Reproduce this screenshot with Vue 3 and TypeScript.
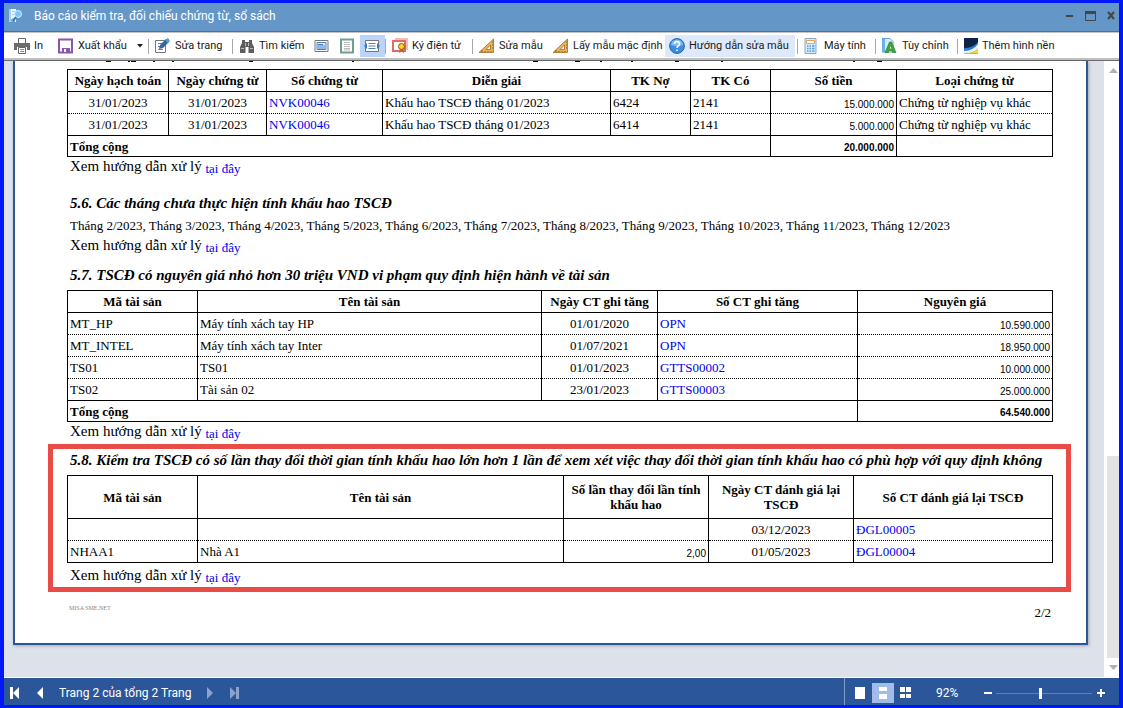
<script setup lang="ts">
import { ref } from 'vue'

const voucherCols = [101, 98, 116, 228, 80, 80, 126, 156]
const assetCols = [130, 344, 116, 200, 195]
const changeCols = [130, 366, 145, 145, 199]

const share = (cols: number[], i: number) =>
  ({ width: (cols[i] / cols.reduce((a, b) => a + b, 0)) * 100 + '%' })

const vouchers = [
  { posted: '31/01/2023', dated: '31/01/2023', no: 'NVK00046', note: 'Khấu hao TSCĐ tháng 01/2023', debit: '6424', credit: '2141', amount: '15.000.000', kind: 'Chứng từ nghiệp vụ khác' },
  { posted: '31/01/2023', dated: '31/01/2023', no: 'NVK00046', note: 'Khấu hao TSCĐ tháng 01/2023', debit: '6414', credit: '2141', amount: '5.000.000', kind: 'Chứng từ nghiệp vụ khác' },
]
const assets = [
  { code: 'MT_HP', name: 'Máy tính xách tay HP', date: '01/01/2020', no: 'OPN', cost: '10.590.000' },
  { code: 'MT_INTEL', name: 'Máy tính xách tay Inter', date: '01/07/2021', no: 'OPN', cost: '18.950.000' },
  { code: 'TS01', name: 'TS01', date: '01/01/2023', no: 'GTTS00002', cost: '10.000.000' },
  { code: 'TS02', name: 'Tài sản 02', date: '23/01/2023', no: 'GTTS00003', cost: '25.000.000' },
]
const changes = [
  { code: '', name: '', count: '', date: '03/12/2023', no: 'ĐGL00005' },
  { code: 'NHAA1', name: 'Nhà A1', count: '2,00', date: '01/05/2023', no: 'ĐGL00004' },
]
const months = [2, 3, 4, 5, 6, 7, 8, 9, 10, 11, 12].map((m) => `Tháng ${m}/2023`).join(', ')
const zoom = ref(92)
</script>

<template>
  <div class="window">
    <header class="titlebar">
      <svg class="app-icon" width="16" height="16" viewBox="0 0 16 16">
        <path d="M1 1h7v13H1z" fill="#e8f6ff" />
        <path d="M1 1h2v13H1zM4 3h3v1H4zM4 6h2v1H4z" fill="#9fd2f2" />
        <circle cx="10" cy="6" r="3.5" fill="#7cc4f4" stroke="#d8f0ff" />
        <path d="M8 9l-3 4" stroke="#2f6fc0" stroke-width="2" />
        <circle cx="5" cy="12.500" r="1.500" fill="none" stroke="#3c7fd0" />
      </svg>
      <h1>Báo cáo kiểm tra, đối chiếu chứng từ, sổ sách</h1>
      <button class="win-btn" aria-label="Thu nhỏ"><svg width="12" height="12"><path d="M3 5h7v2H3z" fill="#444" /></svg></button>
      <button class="win-btn" aria-label="Phóng to"><svg width="12" height="12"><path d="M1.500 1.500h10v9h-10z" fill="none" stroke="#444" /><path d="M1 1h11v3H1z" fill="#444" /></svg></button>
      <button class="win-btn" aria-label="Đóng"><svg width="12" height="12"><path d="M3 2l6 7M9 2L3 9" stroke="#444" stroke-width="2" /></svg></button>
    </header>

    <div class="toolbar">
      <button class="tool t-print">
        <svg width="16" height="16" viewBox="0 0 16 16">
          <path d="M4.500 5V.5h7V5" fill="#fff" stroke="#666" />
          <path d="M0 5h16v7h-3V9H3v3H0z" fill="#6b6b6b" />
          <path d="M4.500 9.500h7v6h-7z" fill="#fff" stroke="#666" /><path d="M6 11.500h4M6 13.500h4" stroke="#5b9bd5" />
        </svg>In
      </button>
      <button class="tool t-export">
        <svg width="16" height="16" viewBox="0 0 16 16">
          <path d="M1 1.500h13v13H1z" fill="#fff" stroke="#8a55ae" stroke-width="2" />
          <path d="M4 10h8v4H4z" fill="#8a55ae" /><path d="M6 11h2v3H6z" fill="#fff" />
        </svg>Xuất khẩu
      </button>
      <button class="tool t-arrow" aria-label="Tùy chọn xuất khẩu"><svg width="6" height="4"><path d="M0 0h6L3 3.500z" fill="#222" /></svg></button>
      <i class="sep"></i>
      <button class="tool t-edit">
        <svg width="16" height="16" viewBox="0 0 16 16">
          <path d="M.5 2.500h10v12H.5z" fill="#fff" stroke="#777" /><path d="M3 5.500h5M3 8.500h3M3 11.500h5" stroke="#5b87b8" />
          <path d="M4 11l1-4 6-6 3 3-6 6z" fill="#35669c" /><path d="M10 2l3 3 2-2-2-3z" fill="#5b9bd5" />
        </svg>Sửa trang
      </button>
      <i class="sep"></i>
      <button class="tool t-find">
        <svg width="16" height="16" viewBox="0 0 16 16">
          <path d="M3 2h3v2h4V2h3v3l2 4v6H9.500V9h-3v6H1V9l2-4z" fill="#5d5d5d" />
          <path d="M6.500 5v3M9.500 5v3M2 10.500h3M11 10.500h3" stroke="#bbb" />
        </svg>Tìm kiếm
      </button>
      <button class="tool t-view" aria-label="Xem ngang"><svg width="16" height="16" viewBox="0 0 16 16"><path d="M1 2.500h13v11H1z" fill="#fff" stroke="#777" /><path d="M3 4.500h9v7H3z" fill="#dcecff" stroke="#4a82bd" /><path d="M4 6.500h5M4 8h7M4 10h7" stroke="#4a82bd" /></svg></button>
      <button class="tool t-view" aria-label="Xem dọc"><svg width="16" height="16" viewBox="0 0 16 16"><path d="M2 1.500h12v13H2z" fill="#fff" stroke="#6ea08a" stroke-width="2" /><path d="M5 4.500h6M5 6.500h6M5 8.500h6M5 10.500h6M5 12h6" stroke="#aaa" stroke-width=".8" /></svg></button>
      <button class="tool t-view active" aria-label="Vừa chiều rộng"><svg width="16" height="16" viewBox="0 0 16 16"><path d="M1.500 2.500h13v11h-13z" fill="#fff" stroke="#777" /><path d="M4.500 5.500h7M4.500 8h7M4.500 10.500h7" stroke="#4a82bd" /><path d="M0 8l3-3v6zM16 8l-3-3v6z" fill="#3f79b8" /></svg></button>
      <i class="sep"></i>
      <button class="tool t-sign">
        <svg width="16" height="16" viewBox="0 0 16 16">
          <path d="M1 3h12v10H1z" fill="#fff" stroke="#e26a62" stroke-width="2" /><path d="M3 1h12v11" fill="none" stroke="#f0a49f" stroke-width="1.500" />
          <path d="M8 10l-1 5 3-1.500 2 2-.5-5.500z" fill="#d95a32" /><circle cx="9.500" cy="8.500" r="3" fill="#ffd21f" stroke="#7c5a18" />
        </svg>Ký điện tử
      </button>
      <i class="sep"></i>
      <button class="tool t-template">
        <svg width="16" height="16" viewBox="0 0 16 16"><path d="M0 14.500L14.500 1v13.500zM7 11.500h4.500V7z" fill="#eab558" stroke="#a66a22" stroke-width=".8" fill-rule="evenodd" /><path d="M3 14v-2M6 14v-1M9 14v-1M12 14v-1M14 4h-1M14 7h-1M14 10h-1" stroke="#875113" /></svg>Sửa mẫu
      </button>
      <button class="tool t-default">
        <svg width="16" height="16" viewBox="0 0 16 16"><path d="M0 14.500L14.500 1v13.500zM7 11.500h4.500V7z" fill="#eab558" stroke="#a66a22" stroke-width=".8" fill-rule="evenodd" /><path d="M3 14v-2M6 14v-1M9 14v-1M12 14v-1M14 4h-1M14 7h-1M14 10h-1" stroke="#875113" /></svg>Lấy mẫu mặc định
      </button>
      <button class="tool t-help">
        <svg width="16" height="16" viewBox="0 0 16 16"><circle cx="8" cy="8" r="7.400" fill="#3a8ee6" stroke="#2563ad" /><path d="M2 7a6 5.500 0 0 1 12 0q-6 2-12 0" fill="#7fbdf6" /><path d="M5.500 6q0-2.500 2.500-2.500T10.500 6q0 1.200-1.300 2T8 10M8 11.500v1.500" fill="none" stroke="#fff" stroke-width="1.600" /></svg>Hướng dẫn sửa mẫu
      </button>
      <i class="sep"></i>
      <button class="tool t-calc">
        <svg width="16" height="16" viewBox="0 0 16 16"><path d="M1 .5h11v15H1z" fill="#d7ecfa" stroke="#88a9c4" /><path d="M2.500 2.500h8v3h-8z" fill="#fff" stroke="#e7a35b" /><path d="M3 8h1.500M5.500 8H7M8 8h2.500M3 10.500h1.500M5.500 10.500H7M8 10.500h2.500M3 13h1.500M5.500 13H7M8 13h2.500" stroke="#5b9bd5" stroke-width="1.600" /></svg>Máy tính
      </button>
      <i class="sep"></i>
      <button class="tool t-custom">
        <svg width="16" height="16" viewBox="0 0 16 16"><path d="M0 .5h8l3 3V14H0z" fill="#d9eefc" stroke="#5ea0d8" /><path d="M0 1h3v13H0z" fill="#69b3ea" /><path d="M3 14.500L7.500 4h2L14 14.500h-3.500l-.6-2H7l-.6 2z" fill="#3fa535" stroke="#1e7a22" stroke-width=".6" /><path d="M7.700 10.500h1.600L8.500 8z" fill="#fff" /></svg>Tùy chỉnh
      </button>
      <i class="sep"></i>
      <button class="tool t-bg">
        <svg width="14" height="16" viewBox="0 0 14 16"><path d="M0 0h14v15.500H0z" fill="#0d2347" /><path d="M0 10q9 0 14-6v6q-6 6-14 5z" fill="#2b78d0" /><path d="M0 13q9 0 14-7v5q-5 4.500-14 4.500z" fill="#e9f3fb" /><path d="M3 15.500q7-1 11-5.500v5.500z" fill="#f7d62b" /></svg>Thêm hình nền
      </button>
    </div>

    <main class="viewer">
      <div class="canvas">
        <article class="page">
          <svg class="cut-line" width="820" height="1" aria-hidden="true">
            <path d="M39 0h5v1h-5zM61 0h2v1h-2zM64 0h5v1h-5zM86 0h2v1h-2zM105 0h2v1h-2zM182 0h4v1h-4zM285 0h2v1h-2zM466 0h5v1h-5zM508 0h5v1h-5zM533 0h2v1h-2zM564 0h2v1h-2zM608 0h4v1h-4zM654 0h2v1h-2zM786 0h2v1h-2zM810 0h5v1h-5z" />
          </svg>
          <table>
            <colgroup><col v-for="(_, i) in voucherCols" :key="i" :style="share(voucherCols, i)" /></colgroup>
            <thead>
              <tr><th>Ngày hạch toán</th><th>Ngày chứng từ</th><th>Số chứng từ</th><th>Diễn giải</th><th>TK Nợ</th><th>TK Có</th><th>Số tiền</th><th>Loại chứng từ</th></tr>
            </thead>
            <tbody>
              <tr v-for="(v, i) in vouchers" :key="i">
                <td class="mid">{{ v.posted }}</td><td class="mid">{{ v.dated }}</td><td><a href="#">{{ v.no }}</a></td><td>{{ v.note }}</td>
                <td>{{ v.debit }}</td><td>{{ v.credit }}</td><td class="num">{{ v.amount }}</td><td>{{ v.kind }}</td>
              </tr>
            </tbody>
            <tfoot><tr><td colspan="6">Tổng cộng</td><td class="num">20.000.000</td><td></td></tr></tfoot>
          </table>
          <p class="guide">Xem hướng dẫn xử lý <a href="#">tại đây</a></p>

          <h2 class="h-months">5.6. Các tháng chưa thực hiện tính khấu hao TSCĐ</h2>
          <p class="months">{{ months }}</p>
          <p class="guide">Xem hướng dẫn xử lý <a href="#">tại đây</a></p>

          <h2 class="h-assets">5.7. TSCĐ có nguyên giá nhỏ hơn 30 triệu VND vi phạm quy định hiện hành về tài sản</h2>
          <table>
            <colgroup><col v-for="(_, i) in assetCols" :key="i" :style="share(assetCols, i)" /></colgroup>
            <thead><tr><th>Mã tài sản</th><th>Tên tài sản</th><th>Ngày CT ghi tăng</th><th>Số CT ghi tăng</th><th>Nguyên giá</th></tr></thead>
            <tbody>
              <tr v-for="a in assets" :key="a.code">
                <td>{{ a.code }}</td><td>{{ a.name }}</td><td class="mid">{{ a.date }}</td><td><a href="#">{{ a.no }}</a></td><td class="num">{{ a.cost }}</td>
              </tr>
            </tbody>
            <tfoot><tr><td colspan="4">Tổng cộng</td><td class="num">64.540.000</td></tr></tfoot>
          </table>
          <p class="guide">Xem hướng dẫn xử lý <a href="#">tại đây</a></p>

          <section class="marked">
            <h2>5.8. Kiểm tra TSCĐ có số lần thay đổi thời gian tính khấu hao lớn hơn 1 lần để xem xét việc thay đổi thời gian tính khấu hao có phù hợp với quy định không</h2>
            <table class="tall">
              <colgroup><col v-for="(_, i) in changeCols" :key="i" :style="share(changeCols, i)" /></colgroup>
              <thead><tr><th>Mã tài sản</th><th>Tên tài sản</th><th>Số lần thay đổi lần tính<br />khấu hao</th><th>Ngày CT đánh giá lại<br />TSCĐ</th><th>Số CT đánh giá lại TSCĐ</th></tr></thead>
              <tbody>
                <tr v-for="c in changes" :key="c.no">
                  <td>{{ c.code }}</td><td>{{ c.name }}</td><td class="num">{{ c.count }}</td><td class="mid">{{ c.date }}</td><td><a href="#">{{ c.no }}</a></td>
                </tr>
              </tbody>
            </table>
            <p class="guide">Xem hướng dẫn xử lý <a href="#">tại đây</a></p>
          </section>

          <footer class="page-foot"><small>MISA SME.NET</small><span>2/2</span></footer>
        </article>
      </div>
      <div class="scrollbar">
        <button aria-label="Cuộn lên"><svg width="9" height="5"><path d="M0 5l4.500-5L9 5z" fill="#b0b0b0" /></svg></button>
        <div class="track"><div class="thumb"></div></div>
        <button aria-label="Cuộn xuống"><svg width="9" height="5"><path d="M0 0h9L4.500 5z" fill="#b0b0b0" /></svg></button>
      </div>
    </main>

    <footer class="status">
      <button class="nav" aria-label="Trang đầu"><svg width="10" height="12"><path d="M1 0h3v12H1zM10 0v12L4 6z" fill="#fff" /></svg></button>
      <button class="nav" aria-label="Trang trước"><svg width="10" height="12"><path d="M9 0v12L3 6z" fill="#fff" /></svg></button>
      <span class="where">Trang 2 của tổng 2 Trang</span>
      <button class="nav" aria-label="Trang sau" disabled><svg width="10" height="12"><path d="M2 0v12l6-6z" fill="#8aa2cc" /></svg></button>
      <button class="nav" aria-label="Trang cuối" disabled><svg width="10" height="12"><path d="M6 0h3v12H6zM0 0v12l6-6z" fill="#8aa2cc" /></svg></button>
      <div class="right">
        <button class="mode" aria-label="Một trang"><svg width="22" height="20"><path d="M6 4h10v12H6z" fill="#fff" /></svg></button>
        <button class="mode on" aria-label="Liên tục"><svg width="22" height="20"><path d="M7 4h8v4H7zM7 11h8v5H7z" fill="#fff" /></svg></button>
        <button class="mode" aria-label="Nhiều trang"><svg width="22" height="20"><path d="M5 4h5v5H5zM11 4h5v5h-5zM5 11h5v4H5zM11 11h5v4h-5z" fill="#fff" /></svg></button>
        <label class="pct" for="zoom">{{ zoom }}%</label>
        <button class="step" aria-label="Thu nhỏ trang"><svg width="10" height="10"><path d="M1 4h8v2H1z" fill="#fff" /></svg></button>
        <input id="zoom" v-model.number="zoom" type="range" min="0" max="200" />
        <button class="step" aria-label="Phóng to trang"><svg width="10" height="10"><path d="M1 4h8v2H1zM4 1h2v8H4z" fill="#fff" /></svg></button>
      </div>
    </footer>
  </div>
</template>

<style>
body { margin: 0; }
</style>

<style scoped>
* { box-sizing: border-box; }
button { border: 0; padding: 0; background: none; color: inherit; font: inherit; display: flex; align-items: center; }
svg { flex: none; display: block; }
.window {
  display: flex; flex-direction: column; min-height: 100vh;
  border: 4px solid #0018f9; border-width: 3px 4px;
  font: 12px/16px Roboto, sans-serif; color: #1a1a1a;
}
.titlebar { display: flex; align-items: center; height: 28px; padding: 0 0 2px 4px; background: #6496c8; color: #fff; }
.titlebar h1 { flex: 1; margin: 0 0 0 10px; font: 12px/16px Roboto, sans-serif; }
.win-btn { width: 16px; height: 20px; justify-content: center; }
.win-btn + .win-btn { margin-left: 5px; }

.toolbar {
  display: flex; align-items: center; height: 30px; padding: 0 6px; overflow: hidden; white-space: nowrap;
  background: #fff; border-top: 1px solid #6b6b6b; border-bottom: 1px solid #6b6b6b;
  box-shadow: inset 0 1px #c4c4c4, inset 0 -2px #c0c0c0;
  font: 11px/14px Roboto, sans-serif;
}
.tool { flex: none; height: 22px; gap: 4px; padding: 0 4px; }
.t-print { width: 44px; }
.t-export { width: 78px; }
.t-arrow { width: 16px; padding: 0 5px; }
.t-edit { width: 81px; }
.t-find { width: 75px; }
.t-view { width: 25px; }
.t-sign { width: 84px; }
.t-template { width: 74px; }
.t-default { width: 113px; }
.t-help { width: 130px; margin: 0 2px 0 3px; background: #deeafc; }
.t-calc { width: 75px; }
.t-custom { width: 79px; }
.active { background: #bcd4fb; }
.sep { flex: none; width: 1px; height: 15px; margin-right: 2px; background: #a8a8a8; }

.viewer { flex: 1; display: flex; background: #fff; border-bottom: 1px solid #fff; }
.canvas { flex: 1; min-width: 0; padding: 0 16px 32px 9px; background: #dde1e9; }
.page {
  padding: 0 33px 21px 52px; background: #fff; border: 2px solid #2b579a; border-top: 0;
  box-shadow: 1px 1px 3px rgba(0, 0, 0, .25);
  font: 13px/16px "Liberation Serif", serif; color: #000;
}
.page a { color: #0000f0; text-decoration: none; }
.cut-line { margin-bottom: 7px; }
h2 { margin: 0 0 0 3px; font: italic bold 15px/20px "Liberation Serif", serif; white-space: nowrap; }
table { width: 100%; table-layout: fixed; border-collapse: collapse; border: 1px solid #000; }
th, td { height: 22px; padding: 0 2px; border-left: 1px solid #000; border-right: 1px solid #000; line-height: 15px; white-space: nowrap; text-align: left; }
th { font-size: 13px; font-weight: bold; text-align: center; border-bottom: 1px solid #000; }
tbody tr + tr td { border-top: 1px dotted #000; }
tfoot td { height: 21px; padding-top: 1px; border-top: 1px solid #000; font-weight: bold; }
.mid { text-align: center; }
.num { padding-top: 3px; text-align: right; font-family: "Liberation Sans", sans-serif; font-size: 10px; }
.tall th { height: 43px; }
.guide { margin: 0 0 0 3px; height: 22px; font-size: 15px; line-height: 18px; }
.guide a { position: relative; top: 2px; font-size: 13px; }
.h-months { margin-top: 14px; }
.months { margin: 5px 0 2px 3px; }
.h-assets { margin-top: 7px; margin-bottom: 5px; }
.marked { margin: 0 -18px 0 -19px; padding: 1px 13px 0 14px; border: 5px solid #e94b46; }
.marked h2 { margin-bottom: 5px; }
.marked .guide { margin-top: 3px; height: 21px; }
.page-foot { display: flex; justify-content: space-between; margin: 12px 2px 0; }
.page-foot small { font-size: 6px; line-height: 8px; color: #888; }
.page-foot span { font-size: 13px; line-height: 18px; }

.scrollbar { display: flex; flex-direction: column; width: 15px; padding-left: 3px; background: #fff; }
.scrollbar button { height: 19px; justify-content: center; }
.track { flex: 1; display: flex; flex-direction: column; justify-content: flex-end; }
.thumb { height: 35%; background: #e3e3e3; }

.status { display: flex; align-items: center; height: 27px; padding: 3px 13px 0 5px; background: #2b579a; color: #fff; font: 12px/16px Roboto, sans-serif; }
.nav { width: 10px; height: 16px; }
.nav + .nav { margin-left: 15px; }
.where { width: 132px; margin: 0 14px 0 15px; white-space: nowrap; }
.right { display: flex; align-items: center; margin: -3px 0 0 auto; padding: 3px 0 0 4px; height: 27px; border-left: 1px solid #7f9cc8; }
.mode { width: 22px; height: 20px; margin-right: 1px; }
.mode.on { background: #a1bce8; }
.pct { width: 47px; margin-left: 18px; }
.step { width: 10px; height: 16px; }
input[type="range"] { width: 96px; height: 12px; margin: 0 4px 0 3px; appearance: none; background: linear-gradient(#5b80bb, #5b80bb) center / 100% 1px no-repeat; }
input[type="range"]::-webkit-slider-thumb { appearance: none; width: 3px; height: 11px; background: #fff; }
</style>
